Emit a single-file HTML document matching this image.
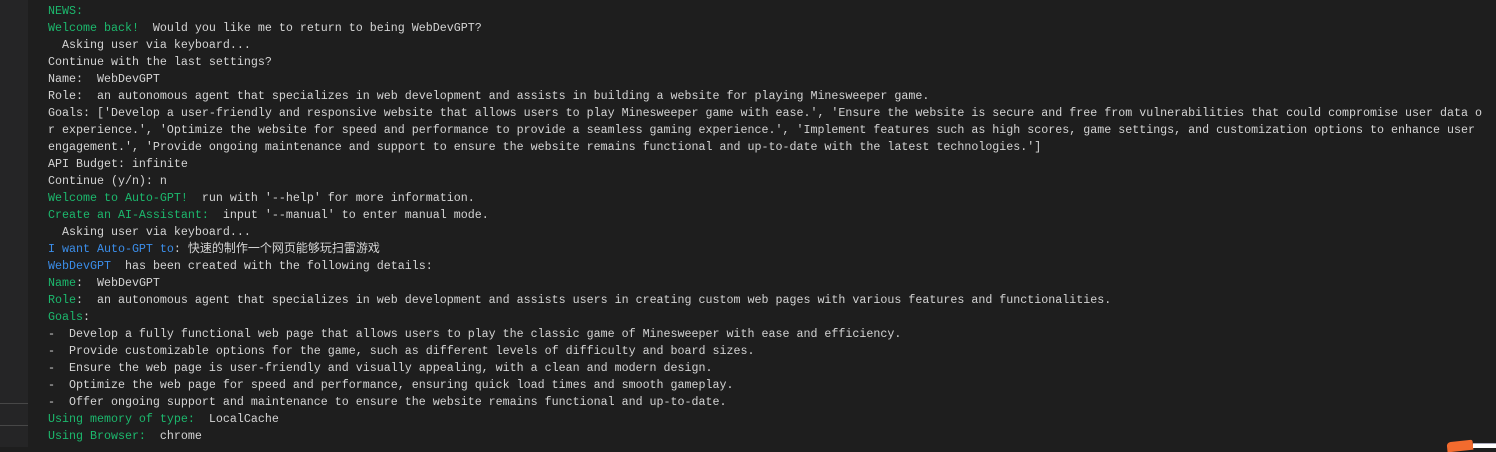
<!DOCTYPE html>
<html><head><meta charset="utf-8"><style>
html,body{margin:0;padding:0;width:1496px;height:447px;overflow:hidden;background:#1e1e1e;}
.side{position:absolute;left:0;top:0;width:28px;height:447px;background:#252526;}
.hl{position:absolute;left:0;width:28px;height:1px;background:#474747;}
pre{position:absolute;left:48px;top:-14.5px;margin:0;font-family:"Liberation Mono","Noto Sans CJK SC",monospace;font-size:11.67px;line-height:17px;color:#d4d4d4;white-space:pre;}
.g{color:#1cb86d;}
.b{color:#3b8eea;}
.cn{font-family:"Noto Sans CJK SC",sans-serif;font-size:12px;line-height:10px;}
</style></head><body>
<div class="side"></div>
<div class="hl" style="top:403px"></div>
<div class="hl" style="top:425px"></div>
<pre>                     y (            )                  y  p g      [ g       pp     ]
<span class="g">NEWS:</span>
<span class="g">Welcome back!</span>  Would you like me to return to being WebDevGPT?
  Asking user via keyboard...
Continue with the last settings?
Name:  WebDevGPT
Role:  an autonomous agent that specializes in web development and assists in building a website for playing Minesweeper game.
Goals: ['Develop a user-friendly and responsive website that allows users to play Minesweeper game with ease.', 'Ensure the website is secure and free from vulnerabilities that could compromise user data o
r experience.', 'Optimize the website for speed and performance to provide a seamless gaming experience.', 'Implement features such as high scores, game settings, and customization options to enhance user
engagement.', 'Provide ongoing maintenance and support to ensure the website remains functional and up-to-date with the latest technologies.']
API Budget: infinite
Continue (y/n): n
<span class="g">Welcome to Auto-GPT!</span>  run with '--help' for more information.
<span class="g">Create an AI-Assistant:</span>  input '--manual' to enter manual mode.
  Asking user via keyboard...
<span class="b">I want Auto-GPT to</span>: <span class="cn">快速的制作一个网页能够玩扫雷游戏</span>
<span class="b">WebDevGPT</span>  has been created with the following details:
<span class="g">Name</span>:  WebDevGPT
<span class="g">Role</span>:  an autonomous agent that specializes in web development and assists users in creating custom web pages with various features and functionalities.
<span class="g">Goals</span>:
-  Develop a fully functional web page that allows users to play the classic game of Minesweeper with ease and efficiency.
-  Provide customizable options for the game, such as different levels of difficulty and board sizes.
-  Ensure the web page is user-friendly and visually appealing, with a clean and modern design.
-  Optimize the web page for speed and performance, ensuring quick load times and smooth gameplay.
-  Offer ongoing support and maintenance to ensure the website remains functional and up-to-date.
<span class="g">Using memory of type:</span>  LocalCache
<span class="g">Using Browser:</span>  chrome</pre>
<div style="position:absolute;left:1447px;top:441px;width:26px;height:10px;background:#f26b2e;border-radius:4px 2px 0 0;transform:rotate(-6deg);"></div>
<div style="position:absolute;left:1473px;top:443px;width:23px;height:4px;background:#fff;border-top:1px solid #aab;"></div>
</body></html>
